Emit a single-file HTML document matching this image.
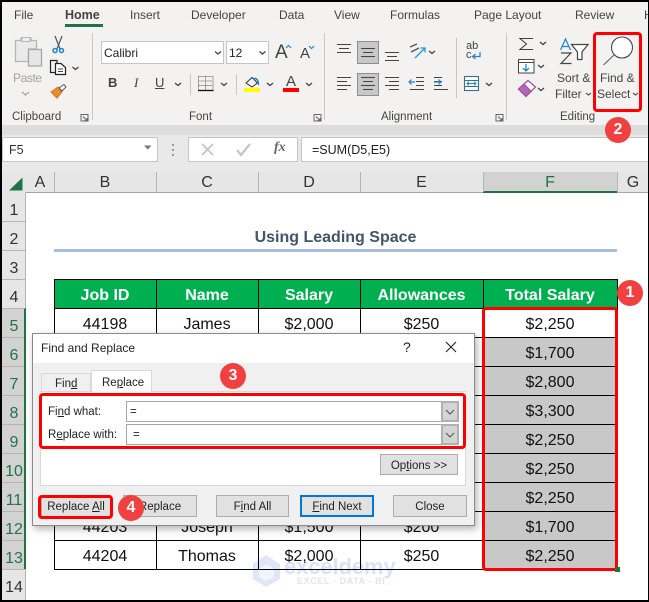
<!DOCTYPE html>
<html><head><meta charset="utf-8">
<style>
html,body{margin:0;padding:0;background:#fff}
#p{position:relative;width:649px;height:602px;overflow:hidden;background:#fff;font-family:"Liberation Sans",sans-serif;color:#000}
#p div{position:absolute}
.r{font-size:12px;color:#444;white-space:nowrap;line-height:14px}
.h{font-size:16px;line-height:20px;text-align:center;color:#333}
.n{font-size:16px;line-height:20px;text-align:center;width:24px;left:2px;color:#333}
.s{color:#217346}
.c{font-size:16px;line-height:20px;text-align:center;color:#111;white-space:nowrap}
.g{font-size:16px;line-height:20px;text-align:center;color:#fff;font-weight:bold;top:286px;white-space:nowrap}
.hl{background:#000;height:1px;left:54px;width:564px}
.vl{background:#000;width:1px;top:279px;height:291px}
.b{background:#e1e1e1;border:1px solid #adadad;box-sizing:border-box;font-size:11.5px;line-height:22px;text-align:center;color:#222;white-space:nowrap}
.d{font-size:11.5px;color:#222;white-space:nowrap;line-height:14px}
.i{background:#fff;border:1px solid #a6a6a6;box-sizing:border-box}
.ib{background:#d4d4d4;border:2px solid #b0b0b0;box-sizing:border-box}
.o{width:26px;height:26px;border-radius:13px;background:#f0403f;color:#fff;font-weight:bold;font-size:16px;line-height:26px;text-align:center}
u{text-decoration:underline}
</style></head><body>
<div id="p">
<!-- ribbon -->
<div style="left:0;top:0;width:649px;height:125px;background:#f3f2f1"></div>
<div style="left:0;top:125px;width:649px;height:10px;background:#dddddd"></div>
<div style="left:0;top:135px;width:649px;height:37px;background:#e9e9e9"></div>
<div style="left:0;top:172px;width:649px;height:20px;background:#e6e6e6"></div>

<div class="r" style="left:14px;top:8px">File</div>
<div class="r" style="left:65px;top:8px;font-weight:bold;color:#444;font-size:12.5px">Home</div>
<div style="left:65px;top:24px;width:38px;height:3px;background:#217346"></div>
<div class="r" style="left:130px;top:8px">Insert</div>
<div class="r" style="left:191px;top:8px">Developer</div>
<div class="r" style="left:279px;top:8px">Data</div>
<div class="r" style="left:334px;top:8px">View</div>
<div class="r" style="left:390px;top:8px">Formulas</div>
<div class="r" style="left:474px;top:8px">Page Layout</div>
<div class="r" style="left:575px;top:8px">Review</div>
<div class="r" style="left:644px;top:8px">H</div>

<div class="i" style="left:101px;top:41px;width:123px;height:23px;border-color:#c6c6c6"></div>
<div class="i" style="left:226px;top:41px;width:43px;height:23px;border-color:#c6c6c6"></div>
<div class="r" style="left:104px;top:46px;color:#222">Calibri</div>
<div class="r" style="left:229px;top:46px;color:#222">12</div>
<div class="r" style="left:275px;top:42px;font-size:19px;line-height:22px">A</div>
<div class="r" style="left:300px;top:45px;font-size:15px;line-height:18px">A</div>
<div class="r" style="left:108px;top:75px;font-size:13px;font-weight:bold;line-height:16px">B</div>
<div class="r" style="left:134px;top:75px;font-size:13px;font-style:italic;font-family:'Liberation Serif',serif;line-height:16px">I</div>
<div class="r" style="left:155px;top:75px;font-size:13px;text-decoration:underline;line-height:16px">U</div>
<div class="r" style="left:286px;top:73px;font-size:15px;line-height:17px">A</div>
<div style="left:244px;top:88px;width:16px;height:4px;background:#ffff00"></div>
<div style="left:283px;top:88px;width:16px;height:4px;background:#ff0000"></div>
<div class="r" style="left:13px;top:71px;color:#a3a3a3;letter-spacing:-.4px">Paste</div>
<div class="r" style="left:12px;top:110px;font-size:11.5px">Clipboard</div>
<div class="r" style="left:189px;top:110px;font-size:11.5px">Font</div>
<div class="r" style="left:381px;top:110px;font-size:11.5px">Alignment</div>
<div class="r" style="left:560px;top:110px;font-size:11.5px">Editing</div>
<div class="r" style="left:557px;top:71px">Sort &amp;</div>
<div class="r" style="left:555px;top:87px">Filter</div>
<div class="r" style="left:600px;top:71px">Find &amp;</div>
<div class="r" style="left:597px;top:87px">Select</div>
<div class="r" style="left:466px;top:42px;font-size:11px;line-height:9px;color:#444;width:14px">ab<br>c</div>

<svg style="position:absolute;left:0;top:0" width="649" height="165" viewBox="0 0 649 165" fill="none">
<!-- separators -->
<path d="M92.500 33V120M324.500 33V120M506.500 33V120M456.500 38V98M190.500 74V95M236.500 74V95" stroke="#c8c8c8"/>
<!-- paste -->
<path d="M15.500 40.500H21V38H31V40.500H36.500V49H28.500V61.500H15.500Z" fill="#eaeaea" stroke="#b5b5b5" stroke-width="1.300"/>
<path d="M22 41.500V37.500H30V41.500Z" fill="#f3f2f1" stroke="#b5b5b5"/>
<rect x="28.500" y="49.500" width="13" height="16.500" fill="#e6e6e6" stroke="#a8a8a8" stroke-width="1.300"/>
<!-- scissors -->
<path d="M55 36L60 49M62 36L57 49" stroke="#555" stroke-width="1.200"/>
<circle cx="55" cy="50.500" r="2" stroke="#1f86d0" stroke-width="1.500"/><circle cx="61.500" cy="50.500" r="2" stroke="#1f86d0" stroke-width="1.500"/>
<!-- copy -->
<path d="M55 72.500H50.500V60.500H57V63" stroke="#222" stroke-width="1.200"/>
<path d="M55.500 63.500H61L65.500 67.500V74.500H55.500Z" fill="#fff" stroke="#222" stroke-width="1.200"/>
<path d="M58 69H63M58 71.500H63" stroke="#444"/>
<!-- painter -->
<path d="M51 92L58 87L62 92L57 98L54 95Z" fill="#ed8b2d" stroke="#d97312"/>
<path d="M59 88L64 84.500L66 87L62 91Z" fill="#fff" stroke="#555"/>
<!-- chevrons -->
<g stroke="#444" stroke-width="1.300">
<path d="M72.500 67L75.500 69.500L78.500 67M215 51.500L218 54L221 51.500M259.500 51.500L262.500 54L265.500 51.500M175 83L178 85.500L181 83M221 83L224 85.500L227 83M267 83L270 85.500L273 83M306 83L309 85.500L312 83M429 51L432 53.500L435 51M486 83L489 85.500L492 83M540 42L543 44.500L546 42M538 65L541 67.500L544 65M538 88L541 90.500L544 88"/>
<path d="M586 93L588.500 95L591 93M633 93L635.500 95L638 93" stroke-width="1.100"/>
</g>
<path d="M22 92L25.500 95L29 92" stroke="#aaa" stroke-width="1.300"/>
<!-- grow/shrink carets -->
<path d="M286 48L288.500 45.500L291 48" stroke="#1f86d0" stroke-width="1.200"/>
<path d="M309 46L311.500 48.500L314 46" stroke="#1f86d0" stroke-width="1.200"/>
<!-- borders icon -->
<path d="M198.500 76.500H213M198.500 81H213M198.500 85.500H213M198.500 76.500V90M213 76.500V90M205.500 76.500V90" stroke="#555" stroke-dasharray="1 1"/>
<path d="M198 90.500H213.500" stroke="#111" stroke-width="1.300"/>
<!-- fill -->
<path d="M246 83L252 77.500L257.500 83L252 87Z" fill="#f3f2f1" stroke="#333"/>
<path d="M253 79C256 77 258.500 80 258.500 85" stroke="#1f86d0" stroke-width="1.500"/>
<!-- launchers -->
<g stroke="#666"><path d="M81 114.500H88V121H81ZM83 116.500L87 120.500M84.500 120.500H87V118"/><path d="M314 114.500H321V121H314ZM316 116.500L320 120.500M317.500 120.500H320V118"/><path d="M496 114.500H503V121H496ZM498 116.500L502 120.500M499.500 120.500H502V118"/></g>
<!-- alignment -->
<rect x="357.500" y="41.500" width="21" height="22" fill="#c8c8c8" stroke="#8e8e8e"/>
<rect x="357.500" y="73.500" width="21" height="22" fill="#c8c8c8" stroke="#8e8e8e"/>
<g stroke="#444" stroke-width="1.100">
<path d="M337 44.500H351M339 48.500H349M337 52.500H351"/>
<path d="M361 48.500H375M363 52.500H373M361 56.500H375"/>
<path d="M385 52.500H399M387 56.500H397M385 60.500H399"/>
<path d="M337 77.500H351M337 81.500H347M337 85.500H351M337 89.500H347"/>
<path d="M361 77.500H375M363 81.500H373M361 85.500H375M363 89.500H373"/>
<path d="M385 77.500H399M389 81.500H399M385 85.500H399M389 89.500H399"/>
<path d="M416 77.500H424M416 81.500H424M416 85.500H424M410 89.500H424M434 77.500H442M434 81.500H442M434 85.500H442M434 89.500H448"/>
</g>
<path d="M409 82H415M411.500 79.500L409 82L411.500 84.500M434 82H441M438.500 79.500L441 82L438.500 84.500" stroke="#1f86d0" stroke-width="1.200"/>
<!-- orientation -->
<path d="M410 47L417 44M411 52L419 48" stroke="#555" stroke-width="1.400"/>
<path d="M415 58L425 48M420.500 48H425V52.500" stroke="#1f9bdc" stroke-width="1.300"/>
<!-- wrap arrow -->
<path d="M480 52V56.500H473M475.500 54L472.500 56.500L475.500 59" stroke="#1f86d0" stroke-width="1.300"/>
<!-- merge -->
<rect x="464.500" y="76.500" width="14" height="14" fill="#fff" stroke="#3a6f8f" stroke-width="1.100"/>
<path d="M464.500 80.500H478.500M464.500 86.500H478.500" stroke="#3a6f8f"/>
<path d="M467 83.500H476M469 81.500L467 83.500L469 85.500M474 81.500L476 83.500L474 85.500" stroke="#1f86d0"/>
<!-- sigma -->
<path d="M533 38.500H520L526.500 44L520 49.500H533" stroke="#444" stroke-width="1.100"/>
<!-- fill down -->
<rect x="518.500" y="59.500" width="15.500" height="13.500" fill="#fff" stroke="#444"/>
<path d="M518.500 62.500H534" stroke="#444"/>
<path d="M526 64V71M523 68L526 71L529 68" stroke="#1f86d0" stroke-width="1.300"/>
<!-- eraser -->
<path d="M518.500 89L528 80.500L535.500 87L526 96.500Z" fill="#fff" stroke="#a34ea3" stroke-width="1.300"/>
<path d="M518.500 89L524 84L531 91L526 96.500Z" fill="#b565b5" stroke="#a34ea3"/>
<!-- sort -->
<path d="M560.500 50L565.500 39L570.500 50M562 46.500H569" stroke="#1f86d0" stroke-width="1.200"/>
<path d="M561 53H571L561 63.500H571.500" stroke="#444" stroke-width="1.200"/>
<path d="M571.500 44.500H588L582 52V59.500H577.500V52Z" fill="#fff" stroke="#444" stroke-width="1.200"/>
<!-- find -->
<circle cx="622" cy="47.500" r="10.500" fill="#fff" stroke="#444" stroke-width="1.100"/>
<path d="M614 55L603.500 65" stroke="#666" stroke-width="1.200"/>
<path d="M173 144V146M173 149V151M173 154V156" stroke="#999" stroke-width="2"/>
</svg>

<div style="left:593px;top:32px;width:49px;height:80px;border:3px solid #f00;border-radius:4px;box-sizing:border-box"></div>

<!-- formula bar -->
<div class="i" style="left:2px;top:137px;width:156px;height:25px;border-color:#c6c6c6"></div>
<div class="i" style="left:188px;top:137px;width:110px;height:25px;border-color:#c6c6c6"></div>
<div class="i" style="left:301px;top:137px;width:348px;height:25px;border-color:#c6c6c6"></div>
<svg style="position:absolute;left:0;top:137px" width="300" height="25" viewBox="0 137 300 25" fill="none">
<path d="M144 145.500H151.500L147.700 149.500Z" fill="#777"/>
<path d="M202 144L213 155M213 144L202 155" stroke="#c4c4c4" stroke-width="1.800"/>
<path d="M237 150L241 155L250 144" stroke="#c4c4c4" stroke-width="2.200"/>
</svg>
<div class="r" style="left:9px;top:143px;color:#333;font-size:12.500px">F5</div>
<div class="r" style="left:274px;top:141px;font-family:'Liberation Serif',serif;font-style:italic;font-weight:bold;font-size:14px;color:#666">fx</div>
<div class="r" style="left:312px;top:143px;color:#222;font-size:12.500px">=SUM(D5,E5)</div>

<!-- column headers -->
<div style="left:483px;top:172px;width:134px;height:20px;background:#d2d2d2"></div>
<div style="left:0;top:192px;width:649px;height:1px;background:#a6a6a6"></div>
<div style="left:483px;top:191px;width:134px;height:2px;background:#217346"></div>
<div style="left:54px;top:172px;width:1px;height:20px;background:#b5b5b5"></div>
<div style="left:156px;top:172px;width:1px;height:20px;background:#b5b5b5"></div>
<div style="left:258px;top:172px;width:1px;height:20px;background:#b5b5b5"></div>
<div style="left:360px;top:172px;width:1px;height:20px;background:#b5b5b5"></div>
<div style="left:483px;top:172px;width:1px;height:20px;background:#b5b5b5"></div>
<div style="left:617px;top:172px;width:1px;height:20px;background:#b5b5b5"></div>
<svg style="position:absolute;left:0;top:172px" width="26" height="20"><path d="M9 18.500L22.500 5.500V18.500Z" fill="#217346"/></svg>
<div class="h" style="left:26px;top:173px;width:28px">A</div>
<div class="h" style="left:54px;top:173px;width:102px">B</div>
<div class="h" style="left:156px;top:173px;width:102px">C</div>
<div class="h" style="left:258px;top:173px;width:102px">D</div>
<div class="h" style="left:360px;top:173px;width:123px">E</div>
<div class="h" style="left:483px;top:173px;width:134px;color:#217346">F</div>
<div class="h" style="left:617px;top:173px;width:32px">G</div>

<!-- row headers -->
<div style="left:0;top:192px;width:26px;height:408px;background:#e6e6e6"></div>
<div style="left:0;top:308px;width:25px;height:261px;background:#d2d2d2"></div>
<div style="left:24px;top:308px;width:2px;height:261px;background:#217346"></div>
<div style="left:25px;top:192px;width:1px;height:116px;background:#b5b5b5"></div>
<div style="left:25px;top:569px;width:1px;height:31px;background:#b5b5b5"></div>
<div style="left:0;top:221px;width:25px;height:1px;background:#b5b5b5"></div>
<div style="left:0;top:250px;width:25px;height:1px;background:#b5b5b5"></div>
<div style="left:0;top:279px;width:25px;height:1px;background:#b5b5b5"></div>
<div style="left:0;top:308px;width:25px;height:1px;background:#b5b5b5"></div>
<div style="left:0;top:337px;width:24px;height:1px;background:#b5b5b5"></div>
<div style="left:0;top:366px;width:24px;height:1px;background:#b5b5b5"></div>
<div style="left:0;top:395px;width:24px;height:1px;background:#b5b5b5"></div>
<div style="left:0;top:424px;width:24px;height:1px;background:#b5b5b5"></div>
<div style="left:0;top:453px;width:24px;height:1px;background:#b5b5b5"></div>
<div style="left:0;top:482px;width:24px;height:1px;background:#b5b5b5"></div>
<div style="left:0;top:511px;width:24px;height:1px;background:#b5b5b5"></div>
<div style="left:0;top:540px;width:24px;height:1px;background:#b5b5b5"></div>
<div style="left:0;top:569px;width:25px;height:1px;background:#b5b5b5"></div>
<div class="n" style="top:201px">1</div>
<div class="n" style="top:230px">2</div>
<div class="n" style="top:259px">3</div>
<div class="n" style="top:288px">4</div>
<div class="n s" style="top:317px">5</div>
<div class="n s" style="top:346px">6</div>
<div class="n s" style="top:375px">7</div>
<div class="n s" style="top:404px">8</div>
<div class="n s" style="top:433px">9</div>
<div class="n s" style="top:462px">10</div>
<div class="n s" style="top:491px">11</div>
<div class="n s" style="top:520px">12</div>
<div class="n s" style="top:549px">13</div>
<div class="n" style="top:578px">14</div>

<!-- title -->
<div style="left:54px;top:228px;width:563px;text-align:center;font-weight:bold;font-size:16px;line-height:20px;color:#44546a">Using Leading Space</div>
<div style="left:54px;top:249px;width:563px;height:3px;background:#a9bce3"></div>

<!-- table -->
<div style="left:54px;top:279px;width:564px;height:29px;background:#00b050"></div>
<div style="left:484px;top:338px;width:133px;height:231px;background:#c8c8c8"></div>

<!-- watermark -->
<svg style="position:absolute;left:250px;top:552px" width="32" height="36"><path d="M16 3L30 12V27L16 35L3 27V12Z" fill="#dfe6f7"/><path d="M16 12L24 17V25L16 29L9 25V17Z" fill="#f3f5fc"/></svg>
<div style="left:284px;top:554px;font-size:22px;line-height:26px;font-weight:bold;color:#d9e2f8;white-space:nowrap;letter-spacing:-.1px">exceldemy</div>
<div style="left:297px;top:575px;font-size:9px;line-height:12px;font-weight:bold;color:#e2e4e9;white-space:nowrap;letter-spacing:.6px">EXCEL - DATA - BI</div>

<div class="hl" style="top:279px"></div><div class="hl" style="top:308px"></div><div class="hl" style="top:337px"></div><div class="hl" style="top:366px"></div><div class="hl" style="top:395px"></div><div class="hl" style="top:424px"></div><div class="hl" style="top:453px"></div><div class="hl" style="top:482px"></div><div class="hl" style="top:511px"></div><div class="hl" style="top:540px"></div><div class="hl" style="top:569px"></div>
<div class="vl" style="left:54px"></div><div class="vl" style="left:156px"></div><div class="vl" style="left:258px"></div><div class="vl" style="left:360px"></div><div class="vl" style="left:483px"></div><div class="vl" style="left:617px"></div>

<div class="g" style="left:54px;width:102px">Job ID</div>
<div class="g" style="left:156px;width:102px">Name</div>
<div class="g" style="left:258px;width:102px">Salary</div>
<div class="g" style="left:360px;width:123px">Allowances</div>
<div class="g" style="left:483px;width:134px">Total Salary</div>

<div class="c" style="left:54px;top:315px;width:102px">44198</div>
<div class="c" style="left:156px;top:315px;width:102px">James</div>
<div class="c" style="left:258px;top:315px;width:102px">$2,000</div>
<div class="c" style="left:360px;top:315px;width:123px">$250</div>
<div class="c" style="left:54px;top:518px;width:102px">44203</div>
<div class="c" style="left:156px;top:518px;width:102px">Joseph</div>
<div class="c" style="left:258px;top:518px;width:102px">$1,500</div>
<div class="c" style="left:360px;top:518px;width:123px">$200</div>
<div class="c" style="left:54px;top:547px;width:102px">44204</div>
<div class="c" style="left:156px;top:547px;width:102px">Thomas</div>
<div class="c" style="left:258px;top:547px;width:102px">$2,000</div>
<div class="c" style="left:360px;top:547px;width:123px">$250</div>
<div class="c" style="left:483px;top:315px;width:134px">$2,250</div>
<div class="c" style="left:483px;top:344px;width:134px">$1,700</div>
<div class="c" style="left:483px;top:373px;width:134px">$2,800</div>
<div class="c" style="left:483px;top:402px;width:134px">$3,300</div>
<div class="c" style="left:483px;top:431px;width:134px">$2,250</div>
<div class="c" style="left:483px;top:460px;width:134px">$2,250</div>
<div class="c" style="left:483px;top:489px;width:134px">$2,250</div>
<div class="c" style="left:483px;top:518px;width:134px">$1,700</div>
<div class="c" style="left:483px;top:547px;width:134px">$2,250</div>

<div style="left:482px;top:307px;width:136px;height:264px;border:3px solid #f00;border-radius:4px;box-sizing:border-box"></div>
<div style="left:615px;top:567px;width:5px;height:5px;background:#217346"></div>

<!-- dialog -->
<div style="left:32px;top:333px;width:443px;height:193px;background:#f0f0f0;border:1px solid #8a8a8a;box-sizing:border-box;box-shadow:2px 3px 7px rgba(0,0,0,.3)"></div>
<div style="left:33px;top:334px;width:441px;height:29px;background:#fff"></div>
<div class="d" style="left:41px;top:341px;font-size:12px">Find and Replace</div>
<div class="d" style="left:403px;top:340px;font-size:14px">?</div>
<svg style="position:absolute;left:445px;top:341px" width="12" height="12"><path d="M1 1L11 11M11 1L1 11" stroke="#222" stroke-width="1.100"/></svg>

<div style="left:41px;top:373px;width:50px;height:19px;border:1px solid #d9d9d9;border-bottom:0;box-sizing:border-box;background:#f0f0f0"></div>
<div style="left:40px;top:391px;width:426px;height:95px;background:#fff;border:1px solid #d9d9d9;box-sizing:border-box"></div>
<div style="left:91px;top:370px;width:61px;height:22px;background:#fff;border:1px solid #d9d9d9;border-bottom:0;box-sizing:border-box"></div>
<div class="d" style="left:55px;top:377px">Fin<u>d</u></div>
<div class="d" style="left:102px;top:376px">Re<u>p</u>lace</div>

<div style="left:39px;top:393px;width:427px;height:56px;border:3px solid #f00;border-radius:4px;box-sizing:border-box"></div>
<div class="d" style="left:48px;top:405px">Fi<u>n</u>d what:</div>
<div class="d" style="left:48px;top:428px">R<u>e</u>place with:</div>
<div class="i" style="left:126px;top:401px;width:333px;height:21px"></div>
<div class="i" style="left:126px;top:424px;width:333px;height:21px"></div>
<div class="d" style="left:130px;top:405px">=</div>
<div class="d" style="left:133px;top:428px">=</div>
<div class="ib" style="left:441px;top:401px;width:18px;height:21px"></div>
<div class="ib" style="left:441px;top:424px;width:18px;height:21px"></div>
<svg style="position:absolute;left:441px;top:401px" width="18" height="44" fill="none"><path d="M5 9L9 13L13 9M5 32L9 36L13 32" stroke="#555" stroke-width="1.100"/></svg>

<div class="b" style="left:380px;top:454px;width:78px;height:21px">Op<u>t</u>ions &gt;&gt;</div>
<div class="b" style="left:41px;top:495px;width:70px;height:22px">Replace <u>A</u>ll</div>
<div class="b" style="left:123px;top:495px;width:74px;height:22px">Replace</div>
<div class="b" style="left:216px;top:495px;width:73px;height:22px">F<u>i</u>nd All</div>
<div class="b" style="left:300px;top:495px;width:74px;height:22px;border:2px solid #0078d7;line-height:20px"><u>F</u>ind Next</div>
<div class="b" style="left:393px;top:495px;width:74px;height:22px">Close</div>
<div style="left:38px;top:495px;width:75px;height:24px;border:3px solid #f00;border-radius:4px;box-sizing:border-box"></div>

<!-- badges -->
<div class="o" style="left:617px;top:280px">1</div>
<div class="o" style="left:605px;top:117px">2</div>
<div class="o" style="left:220px;top:363px">3</div>
<div class="o" style="left:118px;top:495px">4</div>

<!-- frame -->
<div style="left:0;top:0;width:649px;height:2px;background:#000"></div>
<div style="left:0;top:600px;width:649px;height:2px;background:#000"></div>
<div style="left:0;top:0;width:2px;height:602px;background:#000"></div>
<div style="left:648px;top:0;width:1px;height:602px;background:#000"></div>
</div>
</body></html>
